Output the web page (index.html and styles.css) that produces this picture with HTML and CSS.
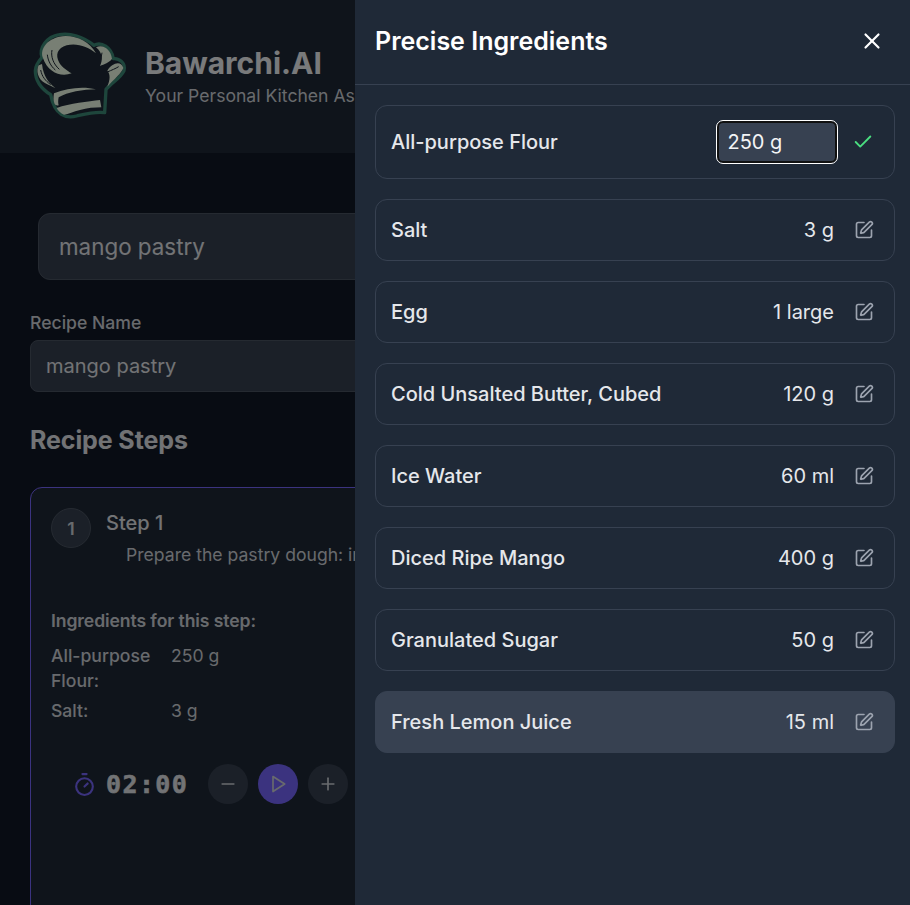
FILE: index.html
```html
<!DOCTYPE html>
<html lang="en">
<head>
<meta charset="utf-8">
<title>Bawarchi.AI</title>
<link rel="stylesheet" href="styles.css">
</head>
<body>
<div class="page">
  <header class="site-header">
    <svg class="logo" viewBox="0 0 360 330" aria-hidden="true">
      <path class="logo-edge" d="M66 112C56 84 80 50 118 44C150 38 190 50 222 76C244 64 274 82 280 116C298 114 318 130 312 152C300 176 276 186 258 208L254 278C226 274 196 282 170 288C140 296 104 288 92 224C70 210 46 186 46 152C46 138 54 126 66 112Z"/>
      <g class="logo-sage">
        <path d="M68 112C60 85 82 58 118 50C160 42 208 62 228 100C205 80 170 68 140 76C112 84 105 105 118 128C126 142 142 152 155 160C125 172 84 160 68 112Z"/>
        <path d="M56 136C48 150 52 178 76 190C88 196 100 202 106 204C86 188 70 170 66 132Z"/>
        <path d="M228 82C250 72 272 88 276 116C268 128 252 132 240 138C248 122 250 100 228 82Z"/>
        <path d="M262 152C276 128 304 120 310 144C304 160 284 176 262 200C270 180 272 164 262 152Z"/>
        <path d="M102 220C140 204 190 198 228 208C190 208 142 216 116 232C114 242 114 250 116 256C110 258 106 256 103 250C100 240 100 230 102 220Z"/>
        <path d="M110 264C150 250 205 244 240 240L244 262C225 262 200 264 180 270C160 275 145 282 132 284C122 280 114 272 110 264Z"/>
      </g>
      <g class="logo-lines">
        <path d="M96 90C92 110 100 132 118 148"/>
        <path d="M82 104C84 122 92 138 106 150"/>
        <path d="M62 150C66 170 76 182 92 194"/>
        <path d="M246 98C244 110 242 122 238 132"/>
        <path d="M296 140C286 146 276 150 262 156"/>
      </g>
    </svg>
    <div class="brand">
      <h1 class="brand-name">Bawarchi.AI</h1>
      <p class="brand-tag">Your Personal Kitchen Assistant</p>
    </div>
  </header>
  <main class="content">
    <div class="search"><span>mango pastry</span></div>
    <label class="field-label">Recipe Name</label>
    <div class="name-input"><span>mango pastry</span></div>
    <h2 class="section-title">Recipe Steps</h2>
    <article class="step-card">
      <div class="step-head">
        <div class="step-num">1</div>
        <div class="step-copy">
          <h3 class="step-title">Step 1</h3>
          <p class="step-desc">Prepare the pastry dough: in a large bowl, whisk the flour and salt.</p>
        </div>
      </div>
      <h4 class="ing-title">Ingredients for this step:</h4>
      <dl class="ing-list">
        <dt>All-purpose Flour:</dt><dd>250 g</dd>
        <dt>Salt:</dt><dd>3 g</dd>
      </dl>
      <div class="timer">
        <svg class="ic timer-ic" viewBox="0 0 24 24"><line x1="10" x2="14" y1="2" y2="2"/><line x1="12" x2="15" y1="14" y2="11"/><circle cx="12" cy="14" r="8"/></svg>
        <span class="timer-time">02:00</span>
        <div class="timer-btns">
          <button class="round"><svg class="ic ic-20" viewBox="0 0 24 24"><path d="M5 12h14"/></svg></button>
          <button class="round round-play"><svg class="ic ic-20" viewBox="0 0 24 24"><polygon points="6 3 20 12 6 21 6 3"/></svg></button>
          <button class="round"><svg class="ic ic-20" viewBox="0 0 24 24"><path d="M5 12h14"/><path d="M12 5v14"/></svg></button>
        </div>
      </div>
    </article>
  </main>
</div>
<div class="overlay"></div>
<aside class="panel">
  <div class="panel-head">
    <h2 class="panel-title">Precise Ingredients</h2>
    <svg class="ic close" viewBox="0 0 24 24"><path d="M18 6 6 18"/><path d="m6 6 12 12"/></svg>
  </div>
  <ul class="rows">
    <li class="row row-edit">
      <span class="row-name">All-purpose Flour</span>
      <div class="row-end">
        <div class="qty-input">250 g</div>
        <svg class="ic check" viewBox="0 0 24 24"><path d="M20 6 9 17l-5-5"/></svg>
      </div>
    </li>
    <li class="row"><span class="row-name">Salt</span><div class="row-end"><span class="row-qty">3 g</span><svg class="ic pen" viewBox="0 0 24 24"><path d="M12 3H5a2 2 0 0 0-2 2v14a2 2 0 0 0 2 2h14a2 2 0 0 0 2-2v-7"/><path d="M18.375 2.625a1 1 0 0 1 3 3l-9.013 9.014a2 2 0 0 1-.853.505l-2.873.84a.5.5 0 0 1-.62-.62l.84-2.873a2 2 0 0 1 .506-.852z"/></svg></div></li>
    <li class="row"><span class="row-name">Egg</span><div class="row-end"><span class="row-qty">1 large</span><svg class="ic pen" viewBox="0 0 24 24"><path d="M12 3H5a2 2 0 0 0-2 2v14a2 2 0 0 0 2 2h14a2 2 0 0 0 2-2v-7"/><path d="M18.375 2.625a1 1 0 0 1 3 3l-9.013 9.014a2 2 0 0 1-.853.505l-2.873.84a.5.5 0 0 1-.62-.62l.84-2.873a2 2 0 0 1 .506-.852z"/></svg></div></li>
    <li class="row"><span class="row-name">Cold Unsalted Butter, Cubed</span><div class="row-end"><span class="row-qty">120 g</span><svg class="ic pen" viewBox="0 0 24 24"><path d="M12 3H5a2 2 0 0 0-2 2v14a2 2 0 0 0 2 2h14a2 2 0 0 0 2-2v-7"/><path d="M18.375 2.625a1 1 0 0 1 3 3l-9.013 9.014a2 2 0 0 1-.853.505l-2.873.84a.5.5 0 0 1-.62-.62l.84-2.873a2 2 0 0 1 .506-.852z"/></svg></div></li>
    <li class="row"><span class="row-name">Ice Water</span><div class="row-end"><span class="row-qty">60 ml</span><svg class="ic pen" viewBox="0 0 24 24"><path d="M12 3H5a2 2 0 0 0-2 2v14a2 2 0 0 0 2 2h14a2 2 0 0 0 2-2v-7"/><path d="M18.375 2.625a1 1 0 0 1 3 3l-9.013 9.014a2 2 0 0 1-.853.505l-2.873.84a.5.5 0 0 1-.62-.62l.84-2.873a2 2 0 0 1 .506-.852z"/></svg></div></li>
    <li class="row"><span class="row-name">Diced Ripe Mango</span><div class="row-end"><span class="row-qty">400 g</span><svg class="ic pen" viewBox="0 0 24 24"><path d="M12 3H5a2 2 0 0 0-2 2v14a2 2 0 0 0 2 2h14a2 2 0 0 0 2-2v-7"/><path d="M18.375 2.625a1 1 0 0 1 3 3l-9.013 9.014a2 2 0 0 1-.853.505l-2.873.84a.5.5 0 0 1-.62-.62l.84-2.873a2 2 0 0 1 .506-.852z"/></svg></div></li>
    <li class="row"><span class="row-name">Granulated Sugar</span><div class="row-end"><span class="row-qty">50 g</span><svg class="ic pen" viewBox="0 0 24 24"><path d="M12 3H5a2 2 0 0 0-2 2v14a2 2 0 0 0 2 2h14a2 2 0 0 0 2-2v-7"/><path d="M18.375 2.625a1 1 0 0 1 3 3l-9.013 9.014a2 2 0 0 1-.853.505l-2.873.84a.5.5 0 0 1-.62-.62l.84-2.873a2 2 0 0 1 .506-.852z"/></svg></div></li>
    <li class="row row-hover"><span class="row-name">Fresh Lemon Juice</span><div class="row-end"><span class="row-qty">15 ml</span><svg class="ic pen" viewBox="0 0 24 24"><path d="M12 3H5a2 2 0 0 0-2 2v14a2 2 0 0 0 2 2h14a2 2 0 0 0 2-2v-7"/><path d="M18.375 2.625a1 1 0 0 1 3 3l-9.013 9.014a2 2 0 0 1-.853.505l-2.873.84a.5.5 0 0 1-.62-.62l.84-2.873a2 2 0 0 1 .506-.852z"/></svg></div></li>
  </ul>
</aside>
</body>
</html>
```

FILE: styles.css
```css
* { box-sizing: border-box; }
html, body { margin: 0; height: 100%; overflow: hidden; }
body {
  font-family: Inter, "Liberation Sans", sans-serif;
  background: #111827;
  color: #f3f4f6;
}
h1, h2, h3, h4, p, dl, dd, ul { margin: 0; padding: 0; }
ul { list-style: none; }

.ic {
  fill: none;
  stroke: currentColor;
  stroke-width: 2;
  stroke-linecap: round;
  stroke-linejoin: round;
  flex: none;
}
.ic-20 { width: 20px; height: 20px; }

.page { height: 905px; overflow: hidden; }
.site-header {
  height: 153px;
  background: #1f2937;
  display: flex;
  align-items: center;
  padding-left: 20px;
  gap: 5px;
}
.logo { width: 120px; height: 110px; flex: none; margin-top: -4px; }
.logo-sage path { fill: #f0ffe8; }
.logo-lines path { fill: none; stroke: #1f2937; stroke-width: 3; }
.logo-edge { fill: none; stroke: #3c8c78; stroke-width: 10; stroke-linejoin: round; }
.brand-name { font-size: 30px; line-height: 36px; font-weight: 700; }
.brand-tag { margin-top: 2px; font-size: 17.6px; line-height: 26px; color: #d1d5db; white-space: nowrap; }

.content { padding: 60px 30px 0; }
.search {
  margin: 0 8px;
  height: 67px;
  background: #374151;
  border: 1px solid #4b5563;
  border-radius: 12px;
  display: flex;
  align-items: center;
  padding-left: 20px;
  font-size: 22.4px;
  color: #e5e7eb;
}
.field-label { display: block; margin-top: 30px; font-size: 17.6px; line-height: 26px; font-weight: 500; color: #d1d5db; }
.name-input {
  margin-top: 4px;
  height: 52px;
  background: #374151;
  border: 1px solid #4b5563;
  border-radius: 8px;
  display: flex;
  align-items: center;
  padding-left: 15px;
  font-size: 20px;
  color: #e5e7eb;
}
.section-title { margin-top: 32px; font-size: 25px; line-height: 32px; font-weight: 700; letter-spacing: -.1px; color: #e5e7eb; }
.step-card {
  margin-top: 31px;
  height: 700px;
  background: #1f2937;
  border: 1px solid #7766ff;
  border-radius: 12px;
  padding: 20px;
}
.step-head { display: flex; gap: 15px; }
.step-num {
  width: 40px;
  height: 40px;
  border-radius: 50%;
  background: #374151;
  border: 1px solid #4b5563;
  display: flex;
  align-items: center;
  justify-content: center;
  flex: none;
  font-size: 17.6px;
  font-weight: 600;
  color: #d1d5db;
}
.step-copy { padding-top: 1px; }
.step-title { font-size: 20px; line-height: 28px; font-weight: 500; color: #e5e7eb; }
.step-desc { margin: 5px 0 0 20px; font-size: 17.6px; line-height: 26px; color: #d1d5db; white-space: nowrap; }
.ing-title { margin-top: 40px; font-size: 17.6px; line-height: 26px; font-weight: 600; letter-spacing: -.1px; color: #d1d5db; }
.ing-list { margin-top: 9px; display: grid; grid-template-columns: 120px 1fr; row-gap: 5px; font-size: 17.6px; line-height: 25px; color: #d1d5db; }
.ing-list dt { font-weight: 500; }
.timer { margin: 41px 0 0 21px; display: flex; align-items: center; height: 40px; }
.timer-ic { width: 25px; height: 25px; color: #7766ff; }
.timer-time {
  margin-left: 9px;
  width: 102px;
  font-family: "DejaVu Sans Mono", monospace;
  font-size: 25px;
  letter-spacing: 1.4px;
  font-weight: 700;
  -webkit-text-stroke: .5px #e5e7eb;
  color: #e5e7eb;
}
.timer-btns { display: flex; gap: 10px; }
.round {
  width: 40px;
  height: 40px;
  border: 0;
  padding: 0;
  border-radius: 50%;
  background: #374151;
  color: #d1d5db;
  display: flex;
  align-items: center;
  justify-content: center;
}
.round-play { background: #7766ff; }

.overlay { position: fixed; inset: 0; background: rgba(0, 0, 0, .5); }
.panel {
  position: fixed;
  top: 0;
  right: 0;
  bottom: 0;
  width: 555px;
  background: #1f2937;
}
.panel-head {
  height: 85px;
  border-bottom: 1px solid #374151;
  display: flex;
  align-items: center;
  justify-content: space-between;
  padding: 0 25px 2px 20px;
}
.panel-title { font-size: 25px; line-height: 32px; font-weight: 600; color: #fff; }
.close { width: 26px; height: 26px; color: #fff; }
.rows { padding: 20px 15px 0 20px; display: flex; flex-direction: column; gap: 20px; }
.row {
  height: 62px;
  border: 1px solid #374151;
  border-radius: 12px;
  padding: 0 15px;
  display: flex;
  align-items: center;
  justify-content: space-between;
  font-size: 20px;
}
.row-edit { height: 74px; }
.row-hover { background: #374151; }
.row-name { font-weight: 500; color: #e5e7eb; }
.row-end { display: flex; align-items: center; }
.row-qty { color: #e5e7eb; }
.pen { width: 20px; height: 20px; margin: 0 5px 0 20px; color: #9ca3af; }
.qty-input {
  width: 120px;
  height: 42px;
  background: #374151;
  border: 2px solid #111;
  border-radius: 6px;
  outline: 1px solid #fff;
  display: flex;
  align-items: center;
  padding-left: 8.5px;
  color: #f3f4f6;
}
.check { width: 22px; height: 22px; margin: 0 5px 0 15px; color: #4ade80; }
```
